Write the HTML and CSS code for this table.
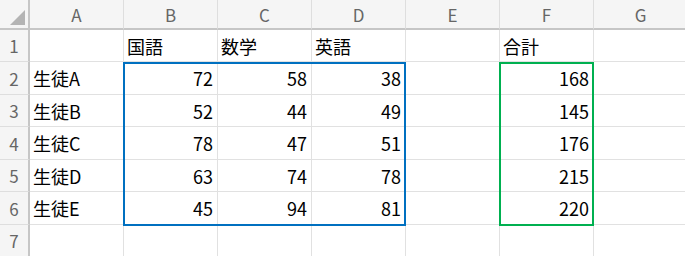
FILE: index.html
```html
<!DOCTYPE html>
<html lang="ja">
<head>
    <meta charset="UTF-8">
    <title>成績表</title>
    <link rel="stylesheet" href="styles.css">
</head>
<body>
    <div class="sheet">
        <div class="grid">
            <div class="corner"><span class="corner-mark"></span></div>
            <div class="col-head">A</div>
            <div class="col-head">B</div>
            <div class="col-head">C</div>
            <div class="col-head">D</div>
            <div class="col-head">E</div>
            <div class="col-head">F</div>
            <div class="col-head">G</div>

            <div class="row-head">1</div>
            <div class="cell"></div>
            <div class="cell">国語</div>
            <div class="cell">数学</div>
            <div class="cell">英語</div>
            <div class="cell"></div>
            <div class="cell">合計</div>
            <div class="cell"></div>

            <div class="row-head">2</div>
            <div class="cell">生徒A</div>
            <div class="cell num">72</div>
            <div class="cell num">58</div>
            <div class="cell num">38</div>
            <div class="cell"></div>
            <div class="cell num">168</div>
            <div class="cell"></div>

            <div class="row-head">3</div>
            <div class="cell">生徒B</div>
            <div class="cell num">52</div>
            <div class="cell num">44</div>
            <div class="cell num">49</div>
            <div class="cell"></div>
            <div class="cell num">145</div>
            <div class="cell"></div>

            <div class="row-head">4</div>
            <div class="cell">生徒C</div>
            <div class="cell num">78</div>
            <div class="cell num">47</div>
            <div class="cell num">51</div>
            <div class="cell"></div>
            <div class="cell num">176</div>
            <div class="cell"></div>

            <div class="row-head">5</div>
            <div class="cell">生徒D</div>
            <div class="cell num">63</div>
            <div class="cell num">74</div>
            <div class="cell num">78</div>
            <div class="cell"></div>
            <div class="cell num">215</div>
            <div class="cell"></div>

            <div class="row-head">6</div>
            <div class="cell">生徒E</div>
            <div class="cell num">45</div>
            <div class="cell num">94</div>
            <div class="cell num">81</div>
            <div class="cell"></div>
            <div class="cell num">220</div>
            <div class="cell"></div>

            <div class="row-head">7</div>
            <div class="cell"></div>
            <div class="cell"></div>
            <div class="cell"></div>
            <div class="cell"></div>
            <div class="cell"></div>
            <div class="cell"></div>
            <div class="cell"></div>
        </div>

        <!-- range outlines drawn over the grid -->
        <div class="range range-scores"></div>
        <div class="range range-total"></div>
    </div>
</body>
</html>
```

FILE: styles.css
```css
body {
    margin: 0;
    background-color: #fff;
    overflow: hidden;
}

.sheet {
    position: relative;
    font-family: "Noto Sans CJK JP", "Noto Sans", sans-serif;
}

.grid {
    display: grid;
    grid-template-columns: 30px repeat(7, 94px);
    grid-template-rows: 30px 32px 33px 32px 33px 32px 33px 32px;
}

.grid > div {
    box-sizing: border-box;
    display: flex;
    align-items: center;
    overflow: hidden;
    white-space: nowrap;
}

.corner {
    background-color: #f5f5f5;
    border-right: 2px solid #c6c6c6;
    border-bottom: 2px solid #c6c6c6;
    position: relative;
}

.corner-mark {
    position: absolute;
    left: 10px;
    top: 10px;
    width: 15px;
    height: 15px;
    background-color: #b4b4b4;
    clip-path: polygon(100% 0, 100% 100%, 0 100%);
}

.col-head {
    background-color: #f5f5f5;
    border-right: 1px solid #dedede;
    border-bottom: 2px solid #c6c6c6;
    justify-content: center;
    color: #666;
    font-size: 17px;
    padding-top: 1px;
}

.row-head {
    background-color: #f5f5f5;
    border-right: 2px solid #c6c6c6;
    border-bottom: 1px solid #dedede;
    justify-content: center;
    color: #666;
    font-size: 17px;
}

.cell {
    border-right: 1px solid #e1e1e1;
    border-bottom: 1px solid #e1e1e1;
    padding: 0 4px 0 3px;
    font-size: 18px;
    color: #000;
}

.num {
    justify-content: flex-end;
}

.range {
    position: absolute;
    top: 62px;
    height: 164px;
    box-sizing: border-box;
    border: 2px solid;
}

.range-scores {
    left: 123px;
    width: 283px;
    border-color: #0070c0;
}

.range-total {
    left: 499px;
    width: 95px;
    border-color: #00b050;
}
```
